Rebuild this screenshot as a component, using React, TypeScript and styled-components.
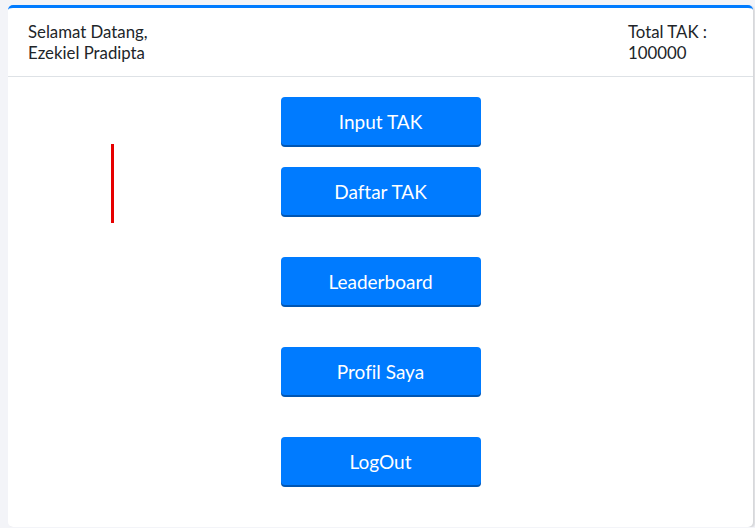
import React from "react";
import styled, { createGlobalStyle } from "styled-components";

const GlobalStyle = createGlobalStyle`
  html, body {
    margin: 0;
    padding: 0;
    background: #f3f4f8;
    font-family: Lato, "Noto Sans", sans-serif;
    font-variant-ligatures: none;
    color: #212529;
  }
`;

const menu = [
  { label: "Input TAK", gap: 0 },
  { label: "Daftar TAK", gap: 22 },
  { label: "Leaderboard", gap: 42 },
  { label: "Profil Saya", gap: 42 },
  { label: "LogOut", gap: 42 },
];

const App = () => {
  return (
    <>
      <GlobalStyle />
      <Card>
        <Header>
          <Greeting>
            Selamat Datang,
            <br />
            Ezekiel Pradipta
          </Greeting>
          <Total>
            Total TAK :
            <br />
            100000
          </Total>
        </Header>
        <Body>
          <Marker />
          {menu.map((item) => (
            <MenuButton key={item.label} $gap={item.gap}>
              {item.label}
            </MenuButton>
          ))}
        </Body>
      </Card>
    </>
  );
};

export default App;

const Card = styled.div`
  margin: 5px 2px 0 8px;
  height: 522px;
  box-sizing: border-box;
  background: #fff;
  border-top: 3px solid #007bff;
  border-radius: 5px;
  box-shadow: 2px 1px 2px rgba(0, 0, 0, 0.12);
  display: flex;
  flex-direction: column;
  overflow: hidden;
`;

const Header = styled.div`
  display: flex;
  justify-content: space-between;
  align-items: center;
  height: 68px;
  padding: 0 0 0 20px;
  border-bottom: 1px solid #dee2e6;
  font-size: 16.8px;
  line-height: 21px;
`;

const Greeting = styled.div``;

const Total = styled.div`
  width: 125px;
`;

const Body = styled.div`
  position: relative;
  flex: 1;
  display: flex;
  flex-direction: column;
  align-items: center;
  padding-top: 20px;
`;

const Marker = styled.div`
  position: absolute;
  left: 103px;
  top: 67px;
  width: 3px;
  height: 79px;
  background: #e60000;
`;

const MenuButton = styled.button<{ $gap: number }>`
  margin-top: ${(p) => p.$gap}px;
  width: 200px;
  height: 48px;
  border: none;
  border-radius: 4px;
  background: #007bff;
  box-shadow: 0 2px 0 #0056b3;
  color: #fff;
  font-family: Lato, "Noto Sans", sans-serif;
  font-variant-ligatures: none;
  font-size: 19px;
  cursor: pointer;
`;
